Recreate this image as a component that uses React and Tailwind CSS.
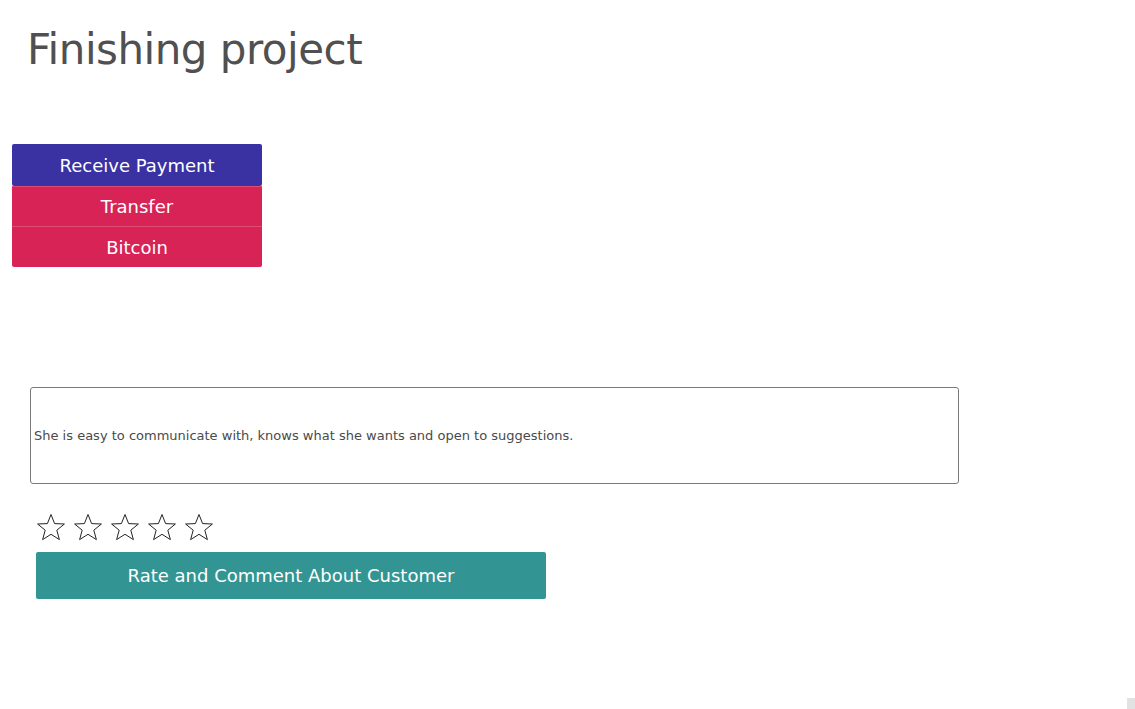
import { useState } from "react";

function Star({ filled, onClick }) {
  return (
    <svg
      onClick={onClick}
      width="30"
      height="28"
      viewBox="0 0 30 28"
      className="cursor-pointer"
    >
      <polygon
        points="15,1.5 18.6,10.6 28.4,11 20.8,17.2 23.4,26.6 15,21.3 6.6,26.6 9.2,17.2 1.6,11 11.4,10.6"
        fill={filled ? "#f5b301" : "none"}
        stroke="#222"
        strokeWidth="1"
        strokeLinejoin="miter"
      />
    </svg>
  );
}

export default function App() {
  const [rating, setRating] = useState(0);
  const [comment, setComment] = useState(
    "She is easy to communicate with, knows what she wants and open to suggestions."
  );

  return (
    <div
      className="relative w-[1135px] h-[709px] bg-white overflow-hidden"
      style={{ fontFamily: "Tahoma, 'DejaVu Sans', Verdana, sans-serif" }}
    >
      <h1 className="pl-[27px] pt-[22px] text-[42px] tracking-[-0.5px] leading-[56px] text-[#505050]">
        Finishing project
      </h1>

      <div className="ml-3 mt-[66px] w-[250px] flex flex-col text-white text-[18px]">
        <button className="h-[42px] bg-[#3a32a2] rounded-[2px]">Receive Payment</button>
        <button className="h-10 bg-[#d82357] border-t border-[#e04a73]">Transfer</button>
        <button className="h-[41px] bg-[#d82357] border-t border-[#e04a73] rounded-b-[2px]">
          Bitcoin
        </button>
      </div>

      <div className="ml-[30px] mt-[120px] w-[929px] h-[97px] border border-[#7a7a7a] rounded-[3px] flex items-center">
        <input
          value={comment}
          onChange={(e) => setComment(e.target.value)}
          className="w-full px-[3px] text-[13px] text-[#4a4a4a] outline-none bg-transparent"
        />
      </div>

      <div className="ml-[36px] mt-[29px] flex gap-[7px]">
        {[1, 2, 3, 4, 5].map((n) => (
          <Star key={n} filled={n <= rating} onClick={() => setRating(n)} />
        ))}
      </div>

      <button className="ml-[36px] mt-[11px] w-[510px] h-[47px] bg-[#329593] text-white text-[18px] rounded-[2px]">
        Rate and Comment About Customer
      </button>

      <div className="absolute right-0 bottom-0 w-2 h-[11px] bg-[#e2e2e2]" />
    </div>
  );
}
